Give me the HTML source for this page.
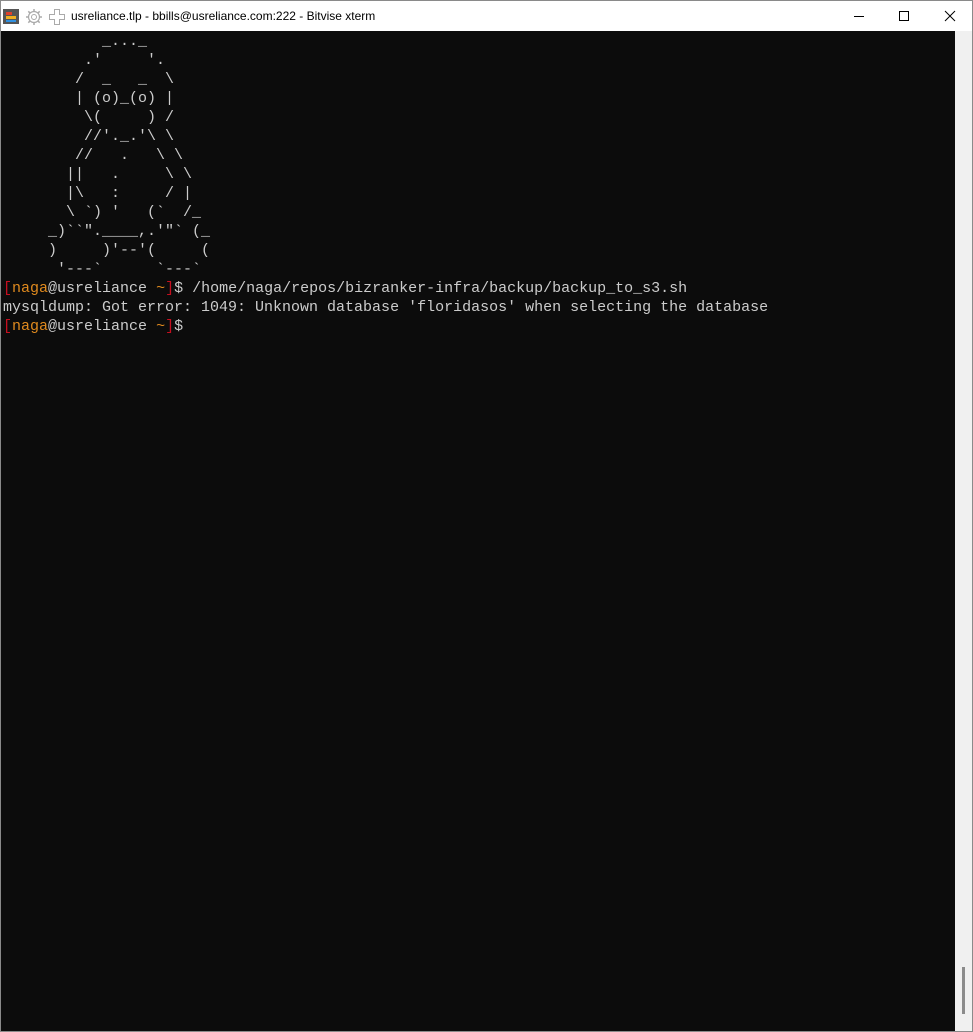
<!DOCTYPE html>
<html><head><meta charset="utf-8">
<style>
html,body{margin:0;padding:0;width:973px;height:1032px;overflow:hidden;background:#fff}
.win{position:absolute;left:0;top:0;width:971px;height:1030px;border:1px solid #8a8a8a;background:#fff}
.title{position:absolute;left:0;top:0;width:971px;height:30px;background:#fff;font-family:"Liberation Sans",sans-serif;font-size:12px;color:#000}
.title .t{position:absolute;left:70px;top:8px}
.term{position:absolute;left:0;top:30px;width:954px;height:1000px;background:#0c0c0c}
.sb{position:absolute;left:954px;top:30px;width:17px;height:1000px;background:#f0f0f0}
.thumb{position:absolute;left:7px;top:936px;width:3px;height:47px;background:#8b8b8b}
pre{margin:0;position:absolute;left:2px;top:1px;font-family:"Liberation Mono",monospace;font-size:15px;line-height:19px;color:#cccccc}
.r{color:#c50f1f}.o{color:#e08a1e}
</style></head><body>
<div class="win">
 <div class="title">
  <div style="position:absolute;left:2px;top:8px;width:16px;height:15px;background:#555"></div>
  <div style="position:absolute;left:5px;top:11px;width:6px;height:3px;background:#e0402a"></div>
  <div style="position:absolute;left:5px;top:15px;width:10px;height:3px;background:#f0b020"></div>
  <div style="position:absolute;left:5px;top:19px;width:10px;height:2px;background:#3090e0"></div>
  <svg style="position:absolute;left:24px;top:7px" width="18" height="18" viewBox="0 0 18 18"><circle cx="9" cy="9" r="5.5" fill="none" stroke="#aaa" stroke-width="1.2"/><circle cx="9" cy="9" r="2.5" fill="none" stroke="#aaa"/><g stroke="#aaa" stroke-width="1.5"><line x1="9" y1="1" x2="9" y2="3.5"/><line x1="9" y1="14.5" x2="9" y2="17"/><line x1="1" y1="9" x2="3.5" y2="9"/><line x1="14.5" y1="9" x2="17" y2="9"/><line x1="3.3" y1="3.3" x2="5" y2="5"/><line x1="13" y1="13" x2="14.7" y2="14.7"/><line x1="3.3" y1="14.7" x2="5" y2="13"/><line x1="13" y1="5" x2="14.7" y2="3.3"/></g></svg>
  <svg style="position:absolute;left:47px;top:7px" width="18" height="18" viewBox="0 0 18 18"><path d="M6.5 1.5h5v5h5v5h-5v5h-5v-5h-5v-5h5z" fill="none" stroke="#aaa"/></svg>
  <span class="t">usreliance.tlp - bbills@usreliance.com:222 - Bitvise xterm</span>
  <div style="position:absolute;left:853px;top:15px;width:10px;height:1px;background:#000"></div>
  <div style="position:absolute;left:898px;top:10px;width:8px;height:8px;border:1px solid #000"></div>
  <svg style="position:absolute;left:943px;top:9px" width="12" height="12"><path d="M1 1L11 11M11 1L1 11" stroke="#000" stroke-width="1"/></svg>
 </div>
 <div class="term"><pre>           _..._
         .'     '.
        /  _   _  \
        | (o)_(o) |
         \(     ) /
         //'._.'\ \
        //   .   \ \
       ||   .     \ \
       |\   :     / |
       \ `) '   (`  /_
     _)``".____,.'"` (_
     )     )'--'(     (
      '---`      `---`
<span class="r">[</span><span class="o">naga</span>@usreliance <span class="o">~</span><span class="r">]</span>$ /home/naga/repos/bizranker-infra/backup/backup_to_s3.sh
mysqldump: Got error: 1049: Unknown database 'floridasos' when selecting the database
<span class="r">[</span><span class="o">naga</span>@usreliance <span class="o">~</span><span class="r">]</span>$</pre></div>
 <div class="sb"><div class="thumb"></div></div>
</div>
</body></html>
